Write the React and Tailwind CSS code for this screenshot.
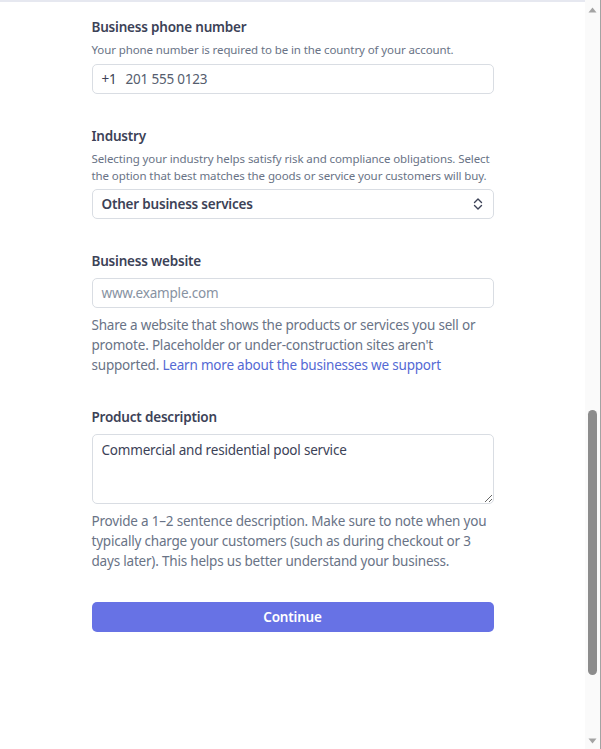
import React from 'react';

const font = { fontFamily: '"Noto Sans", "Open Sans", sans-serif' };

const Label = ({ children }) => (
  <div className="text-[13.5px] font-semibold leading-5 tracking-[-0.2px] text-[#3c4257]">{children}</div>
);

const Help = ({ children, className = '' }) => (
  <p className={`text-[11.5px] leading-[17px] tracking-[-0.1px] text-[#697386] ${className}`}>{children}</p>
);

const Scrollbar = () => (
  <div className="flex w-[16px] flex-col items-center border-r border-[#a3a3a3] bg-[#fafafa] pt-[7px] pb-[5px]">
    <svg width="9" height="6" viewBox="0 0 9 6">
      <path d="M0.5 5.5 L4.5 0.5 L8.5 5.5 Z" fill="#a3a3a3" />
    </svg>
    <div className="h-[397px]" />
    <div className="h-[265px] w-[9px] rounded-full bg-[#8c8c8c]" />
    <div className="flex-1" />
    <svg width="9" height="6" viewBox="0 0 9 6">
      <path d="M0.5 0.5 L4.5 5.5 L8.5 0.5 Z" fill="#a3a3a3" />
    </svg>
  </div>
);

export default function App() {
  return (
    <div className="flex h-[749px] w-full overflow-hidden bg-white" style={font}>
      <div className="flex-1 border-t-2 border-[#e6e8f0]">
        <div className="mx-auto w-[402px] pt-[15px] text-[13.5px] tracking-[-0.2px]">
          {/* Phone */}
          <Label>Business phone number</Label>
          <Help className="mt-[4px]">
            Your phone number is required to be in the country of your account.
          </Help>
          <div className="mt-[6px] flex h-[30px] items-center rounded-[5px] border border-[#d9dde3] px-[9px] text-[#3c4257]">
            <span>+1</span>
            <span className="ml-[9px] text-[#555d6e]">201 555 0123</span>
          </div>

          {/* Industry */}
          <div className="mt-[32px]">
            <Label>Industry</Label>
          </div>
          <Help className="mt-[4px]">
            Selecting your industry helps satisfy risk and compliance obligations. Select the option that best matches the goods or service your customers will buy.
          </Help>
          <div className="mt-[5px] flex h-[30px] items-center justify-between rounded-[5px] border border-[#d9dde3] px-[9px] font-semibold text-[#3c4257]">
            <span>Other business services</span>
            <svg width="12" height="14" viewBox="0 0 12 14" fill="none" stroke="#3c4257" strokeWidth="1.4" strokeLinecap="round" strokeLinejoin="round">
              <path d="M2.5 5.5 L6 2 L9.5 5.5" />
              <path d="M2.5 8.5 L6 12 L9.5 8.5" />
            </svg>
          </div>

          {/* Website */}
          <div className="mt-[32px]">
            <Label>Business website</Label>
          </div>
          <div className="mt-[7px] flex h-[30px] items-center rounded-[5px] border border-[#d9dde3] px-[9px] text-[#8792a2]">
            www.example.com
          </div>
          <p className="mt-[7px] leading-5 text-[#697386]">
            Share a website that shows the products or services you sell or promote. Placeholder or under-construction sites aren't supported.{' '}
            <a className="text-[#5469d4]">Learn more about the businesses we support</a>
          </p>

          {/* Product description */}
          <div className="mt-[32px]">
            <Label>Product description</Label>
          </div>
          <textarea
            className="mt-[7px] block h-[70px] w-full rounded-[5px] border border-[#d9dde3] px-[9px] py-[5px] text-[13.5px] leading-5 tracking-[-0.2px] text-[#3c4257] outline-none"
            defaultValue="Commercial and residential pool service"
            style={font}
          />
          <p className="mt-[7px] leading-5 text-[#697386]">
            Provide a 1–2 sentence description. Make sure to note when you typically charge your customers (such as during checkout or 3 days later). This helps us better understand your business.
          </p>

          <button className="mt-[31px] flex h-[30px] w-full items-center justify-center rounded-[5px] bg-[#6772e5] font-semibold text-white">
            Continue
          </button>
        </div>
      </div>
      <Scrollbar />
    </div>
  );
}
